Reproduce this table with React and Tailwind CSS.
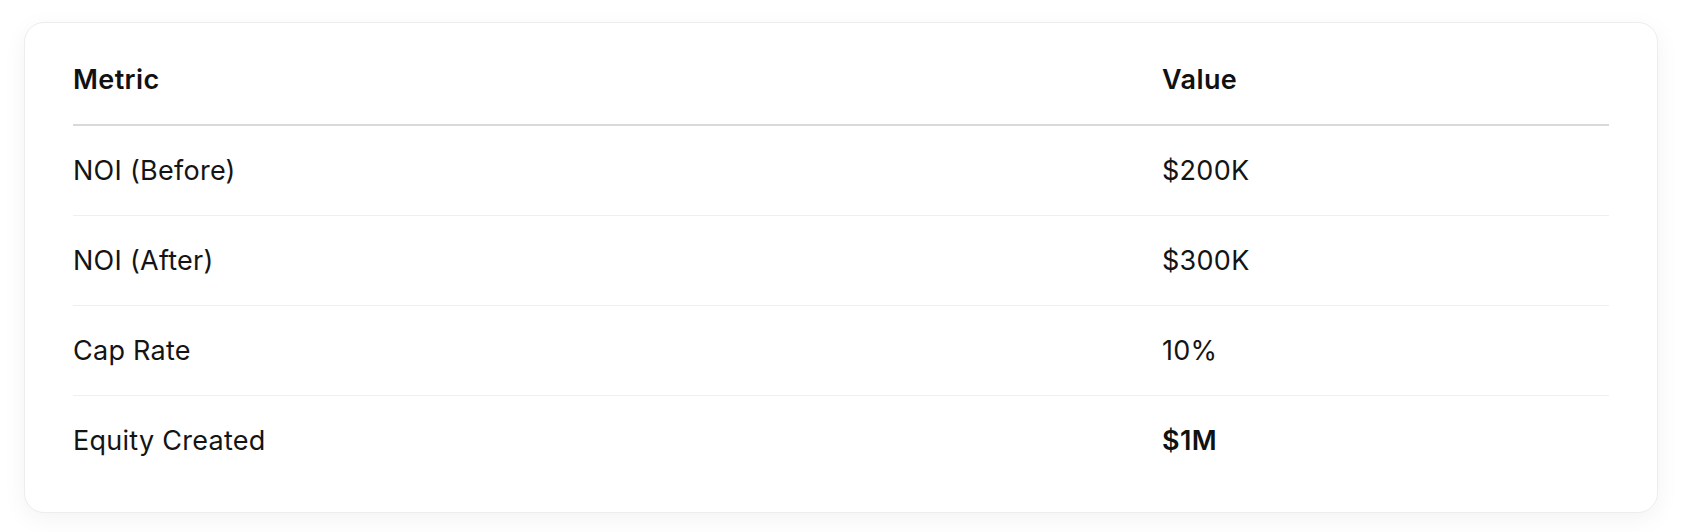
import React from "react";

const rows = [
  { metric: "NOI (Before)", value: "$200K" },
  { metric: "NOI (After)", value: "$300K" },
  { metric: "Cap Rate", value: "10%" },
  { metric: "Equity Created", value: "$1M", bold: true },
];

export default function App() {
  return (
    <div
      className="w-[1690px] h-[532px] bg-white"
      style={{ fontFamily: "Inter, 'Noto Sans', sans-serif" }}
    >
      <div className="ml-[24px] pt-[22px]">
        <div className="w-[1634px] rounded-[20px] border border-[#ededed] bg-white px-[48px] pt-[41px] pb-[27px] shadow-[0_6px_24px_rgba(0,0,0,0.05)] text-[27px] leading-[32px] tracking-[0.01em] text-[#141414]">
          <div className="grid grid-cols-[1089px_1fr] border-b-2 border-[#d9d9d9] pb-[28px] font-semibold tracking-[0.015em] text-[#111]">
            <div>Metric</div>
            <div>Value</div>
          </div>
          {rows.map((r, i) => (
            <div
              key={r.metric}
              className={
                i < rows.length - 1
                  ? "grid grid-cols-[1089px_1fr] items-center h-[90px] border-b border-[#efefef]"
                  : "grid grid-cols-[1089px_1fr] items-center h-[89px]"
              }
            >
              <div>{r.metric}</div>
              <div className={r.bold ? "font-semibold tracking-[0.015em] text-[#111]" : ""}>{r.value}</div>
            </div>
          ))}
        </div>
      </div>
    </div>
  );
}
